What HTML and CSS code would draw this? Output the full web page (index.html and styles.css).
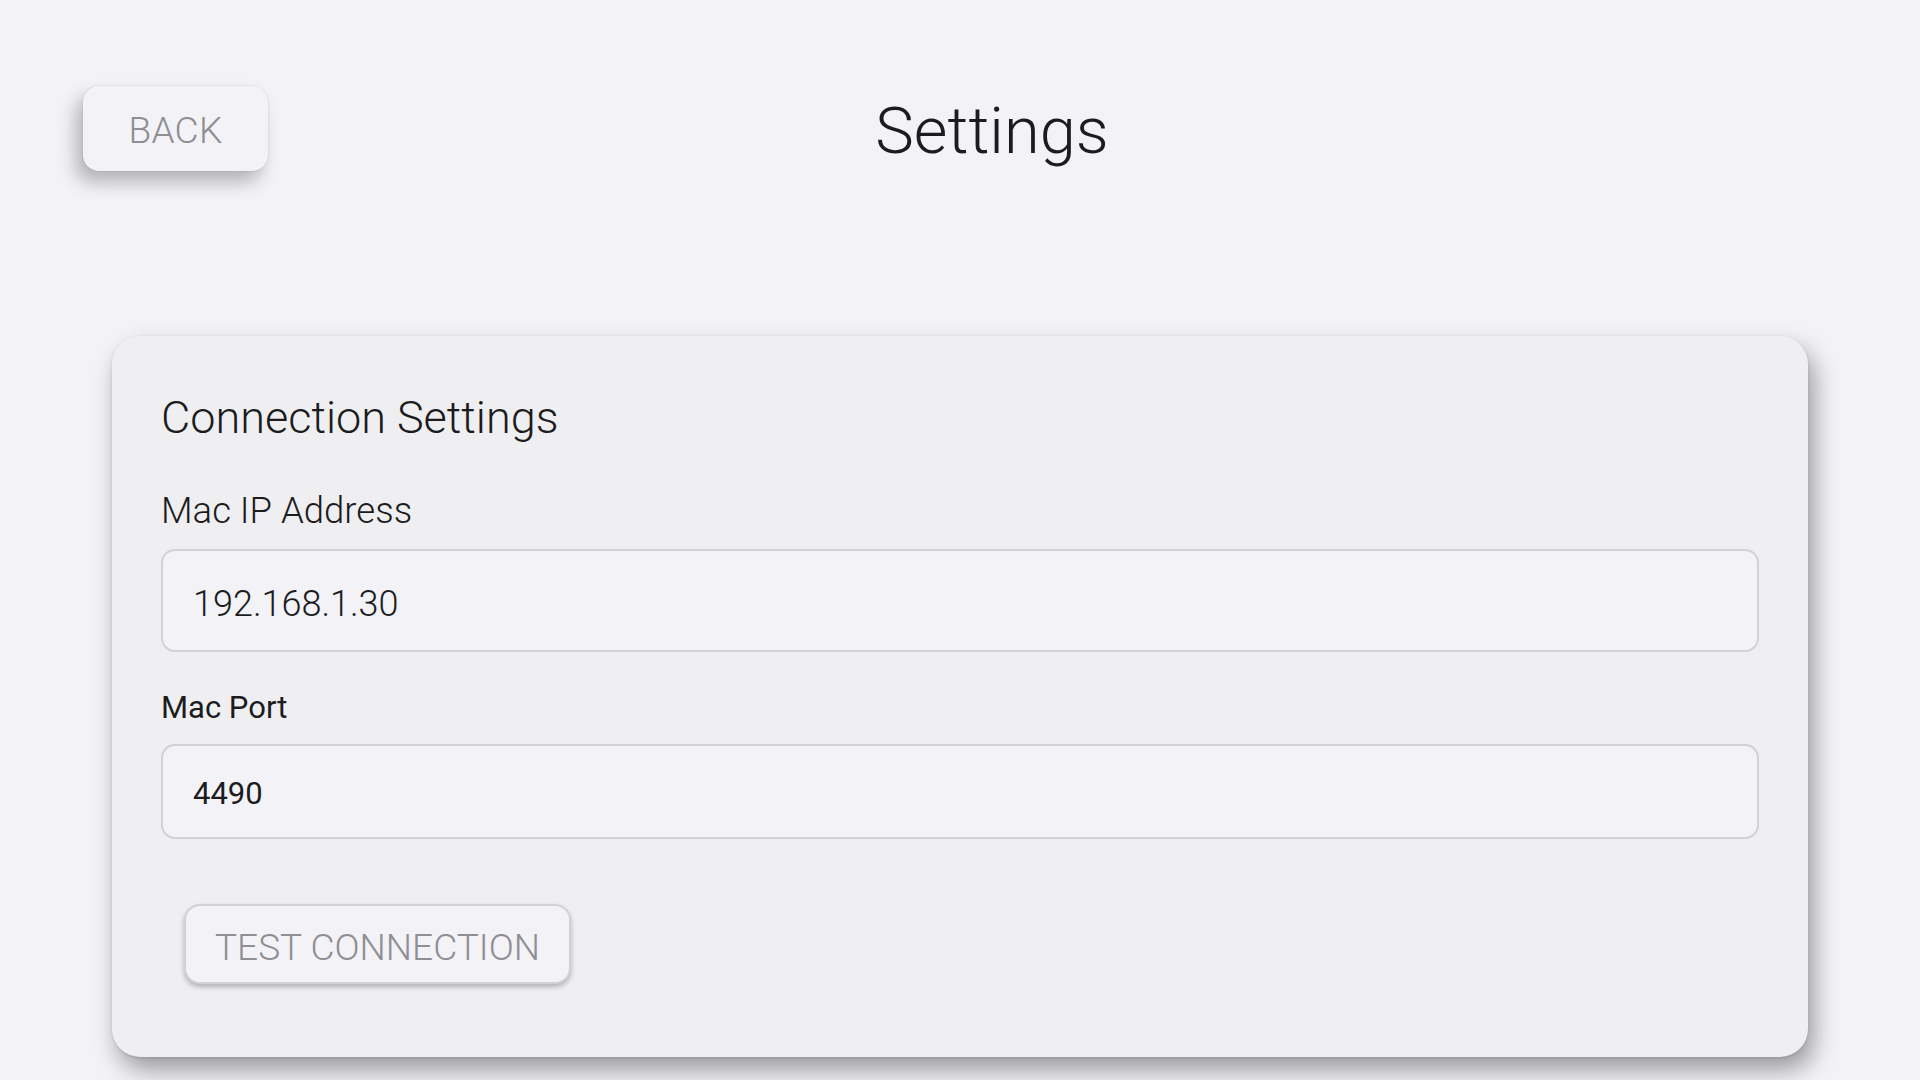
FILE: index.html
```html
<!DOCTYPE html>
<html lang="en">
<head>
<meta charset="utf-8">
<title>Settings</title>
<link rel="stylesheet" href="styles.css">
</head>
<body>
<header class="header">
  <button class="back-btn" type="button">BACK</button>
  <h1 class="title">Settings</h1>
</header>
<main class="card">
  <h2 class="card-title">Connection Settings</h2>
  <label class="label label-light" for="ip">Mac IP Address</label>
  <input class="field field-ip" id="ip" type="text" value="192.168.1.30">
  <label class="label label-regular" for="port">Mac Port</label>
  <input class="field field-port" id="port" type="text" value="4490">
  <div class="actions">
    <button class="test-btn" type="button">TEST CONNECTION</button>
  </div>
</main>
</body>
</html>
```
FILE: styles.css
```css
html, body {
  margin: 0;
  padding: 0;
}
body {
  background: #f2f2f7;
  font-family: Roboto, "Liberation Sans", Arial, sans-serif;
  color: #1c1c1e;
  height: 1080px;
  overflow: hidden;
}
.header {
  display: flex;
  align-items: center;
  padding: 86px 204px 0 83px;
}
.back-btn {
  width: 185px;
  height: 85px;
  border: none;
  border-radius: 16px;
  background: #f2f2f7;
  font-family: Roboto, "Liberation Sans", sans-serif;
  font-weight: 300;
  font-size: 37px;
  color: #8e8e93;
  box-shadow: -7px 11px 18px rgba(0, 0, 0, 0.26), 0 0 2px rgba(0, 0, 0, 0.14);
  padding: 3px 0 0 0;
  letter-spacing: 0.3px;
}
.title {
  flex: 1;
  margin: 5px 0 0 0;
  text-align: center;
  font-weight: 300;
  font-size: 65px;
  line-height: 75px;
  color: #1c1c1e;
}
.card {
  display: flex;
  flex-direction: column;
  align-items: stretch;
  margin: 165px 112px 0 112px;
  padding: 56px 49px 73px 49px;
  background: #efeff2;
  border-radius: 28px;
  box-shadow: 6px 13px 24px rgba(0, 0, 0, 0.36), 0 1px 3px rgba(0, 0, 0, 0.12);
}
.card-title {
  margin: 0;
  font-weight: 300;
  font-size: 45px;
  line-height: 52px;
  color: #1c1c1e;
}
.label {
  display: block;
  color: #1c1c1e;
}
.label-light {
  margin-top: 46px;
  font-weight: 300;
  font-size: 36.5px;
  line-height: 42px;
}
.label-regular {
  margin-top: 37px;
  font-weight: 400;
  font-size: 31px;
  line-height: 38px;
}
.field {
  box-sizing: border-box;
  width: 100%;
  margin: 17px 0 0 0;
  padding: 0 30px;
  border: 2px solid #d1d1d6;
  border-radius: 14px;
  background: #f2f2f7;
  font-family: Roboto, "Liberation Sans", sans-serif;
  color: #1c1c1e;
  outline: none;
}
.field-ip {
  height: 103px;
  padding-top: 6px;
  font-weight: 300;
  font-size: 36px;
}
.field-port {
  height: 95px;
  padding-top: 3px;
  font-weight: 400;
  font-size: 31px;
}
.actions {
  display: flex;
  margin-top: 65px;
  padding-left: 23px;
}
.test-btn {
  height: 80px;
  width: 387px;
  padding: 6px 0 0 0;
  border: 2px solid #d1d1d6;
  border-radius: 16px;
  background: #f2f2f7;
  font-family: Roboto, "Liberation Sans", sans-serif;
  font-weight: 300;
  font-size: 37px;
  color: #8e8e93;
  box-shadow: 0 3px 5px rgba(0, 0, 0, 0.25);
}
```
